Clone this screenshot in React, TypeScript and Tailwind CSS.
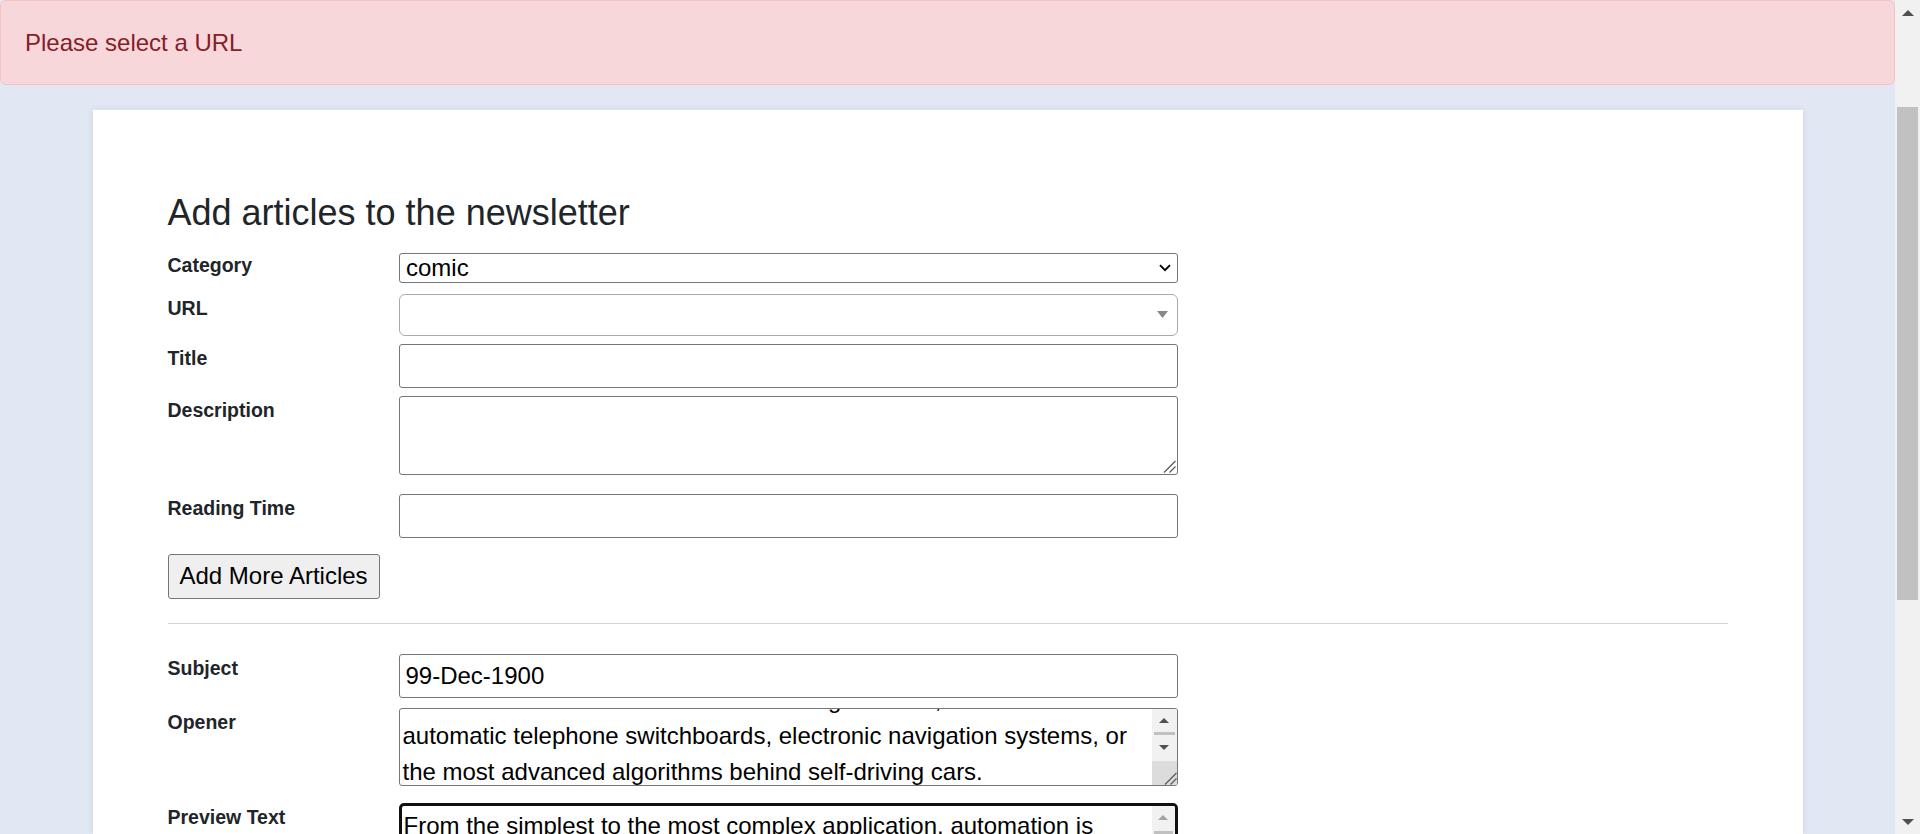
import React from "react";

const Label = ({ children }: { children: React.ReactNode }) => (
  <div className="w-[231px] shrink-0 text-[19.5px] font-bold leading-[29.25px] text-[#212529]">
    {children}
  </div>
);

const Grip = () => (
  <svg width="13" height="13" viewBox="0 0 13 13" className="block">
    <path d="M1 12.5 L12.5 1 M6.5 12.5 L12.5 6.5" stroke="#5c5c5c" strokeWidth="1.3" fill="none" />
  </svg>
);

const Tri = ({ up, color, w = 10, h = 5 }: { up?: boolean; color: string; w?: number; h?: number }) => (
  <svg width={w} height={h} viewBox={`0 0 ${w} ${h}`} className="block">
    {up ? (
      <polygon points={`0,${h} ${w},${h} ${w / 2},0`} fill={color} />
    ) : (
      <polygon points={`0,0 ${w},0 ${w / 2},${h}`} fill={color} />
    )}
  </svg>
);

export default function App() {
  return (
    <div className="flex h-[834px] w-[1920px] overflow-hidden font-['Liberation_Sans',Arial,sans-serif]">
      {/* page */}
      <div className="flex min-w-0 flex-1 flex-col bg-[#e1e8f4]">
        <div className="flex h-[85px] shrink-0 items-center rounded-[6px] border border-[#f5c2c7] bg-[#f8d7da] pl-[24px] text-[24px] leading-[36px] text-[#842029]">
          Please select a URL
        </div>

        <div className="mx-auto mt-[25px] flex min-h-0 w-[1710px] flex-1 flex-col overflow-hidden bg-white px-[75px] pt-[81px] shadow-[0_0_6px_rgba(40,60,120,0.10)]">
          <h4 className="text-[36px] font-normal leading-[43.2px] text-[#212529]">
            Add articles to the newsletter
          </h4>

          {/* Category */}
          <div className="mt-[16.7px] flex items-start">
            <Label>Category</Label>
            <div className="mt-[2.4px] flex h-[30px] w-[779px] items-center justify-between rounded-[3px] border border-[#767676] bg-white pl-[6.5px] pr-[6px] text-[24px] leading-none text-black">
              <span>comic</span>
              <svg width="12" height="8" viewBox="0 0 12 8" className="block">
                <path d="M1 1.2 L6 6.2 L11 1.2" stroke="#000" strokeWidth="1.9" fill="none" />
              </svg>
            </div>
          </div>

          {/* URL */}
          <div className="mt-[11px] flex items-start">
            <Label>URL</Label>
            <div className="flex h-[41.4px] w-[779px] items-center justify-end rounded-[6px] border border-[#aaaaaa] bg-white pr-[9px]">
              <Tri color="#888888" w={11} h={7} />
            </div>
          </div>

          {/* Title */}
          <div className="mt-[8.3px] flex items-start">
            <Label>Title</Label>
            <div className="h-[44.3px] w-[779px] rounded-[3px] border border-[#767676] bg-white" />
          </div>

          {/* Description */}
          <div className="mt-[7.7px] flex items-start">
            <Label>Description</Label>
            <div className="flex h-[79.3px] w-[779px] items-end justify-end rounded-[3px] border border-[#767676] bg-white p-[1px]">
              <Grip />
            </div>
          </div>

          {/* Reading Time */}
          <div className="mt-[19px] flex items-start">
            <Label>Reading Time</Label>
            <div className="h-[44px] w-[779px] rounded-[3px] border border-[#767676] bg-white" />
          </div>

          <div className="mt-[15.7px] flex">
            <button className="flex h-[45px] items-center rounded-[3px] border border-[#767676] bg-[#efefef] px-[11px] text-[24px] leading-none text-black">
              Add More Articles
            </button>
          </div>

          <div className="mt-[24px] h-[1.5px] w-full shrink-0 bg-[#d2d3d4]" />

          {/* Subject */}
          <div className="mt-[30px] flex items-start">
            <Label>Subject</Label>
            <div className="flex h-[44px] w-[779px] items-center rounded-[3px] border border-[#767676] bg-white pl-[6px] text-[24px] leading-none text-black">
              99-Dec-1900
            </div>
          </div>

          {/* Opener */}
          <div className="mt-[9.4px] flex items-start">
            <Label>Opener</Label>
            <div className="flex h-[78.3px] w-[779px] overflow-hidden rounded-[3px] border border-[#767676] bg-white">
              <div className="min-w-0 flex-1 overflow-hidden pl-[3px]">
                <div className="mt-[-27.2px] whitespace-nowrap text-[24px] leading-[36px] text-black">
                  <div>From the thermostat in the hall to the large motors, the robots and</div>
                  <div>automatic telephone switchboards, electronic navigation systems, or</div>
                  <div>the most advanced algorithms behind self-driving cars.</div>
                </div>
              </div>
              <div className="flex w-[24.5px] shrink-0 flex-col bg-[#f1f1f1]">
                <div className="flex h-[23px] items-center justify-center">
                  <Tri up color="#505050" />
                </div>
                <div className="mx-[2px] h-[3px] bg-[#c1c1c1]" />
                <div className="flex h-[25px] items-center justify-center">
                  <Tri color="#505050" />
                </div>
                <div className="flex-1" />
                <div className="flex h-[24.5px] items-end justify-end bg-[#dcdcdc]">
                  <Grip />
                </div>
              </div>
            </div>
          </div>

          {/* Preview Text */}
          <div className="mt-[17.3px] flex items-start">
            <Label>Preview Text</Label>
            <div className="flex h-[90px] w-[779px] overflow-hidden rounded-[5px] border-[3px] border-[#101010] bg-white">
              <div className="min-w-0 flex-1 overflow-hidden pl-[2px] pt-[1.3px] text-[24px] leading-[36px] text-black">
                From the simplest to the most complex application, automation is everywhere around us today.
              </div>
              <div className="flex w-[23px] shrink-0 flex-col bg-[#f1f1f1]">
                <div className="flex h-[22px] items-center justify-center">
                  <Tri up color="#a3a3a3" />
                </div>
                <div className="mx-[2px] mt-[3px] h-[40px] bg-[#c1c1c1]" />
              </div>
            </div>
          </div>
        </div>
      </div>

      {/* page scrollbar */}
      <div className="flex w-[25px] shrink-0 flex-col bg-[#f1f1f1]">
        <div className="flex h-[25px] shrink-0 items-center justify-center pt-[1px]">
          <Tri up color="#505050" w={12} h={6} />
        </div>
        <div className="ml-[2px] mt-[82px] h-[493px] w-[21px] shrink-0 bg-[#c1c1c1]" />
        <div className="flex-1" />
        <div className="flex h-[25px] shrink-0 items-center justify-center">
          <Tri color="#505050" w={12} h={6} />
        </div>
      </div>
    </div>
  );
}
